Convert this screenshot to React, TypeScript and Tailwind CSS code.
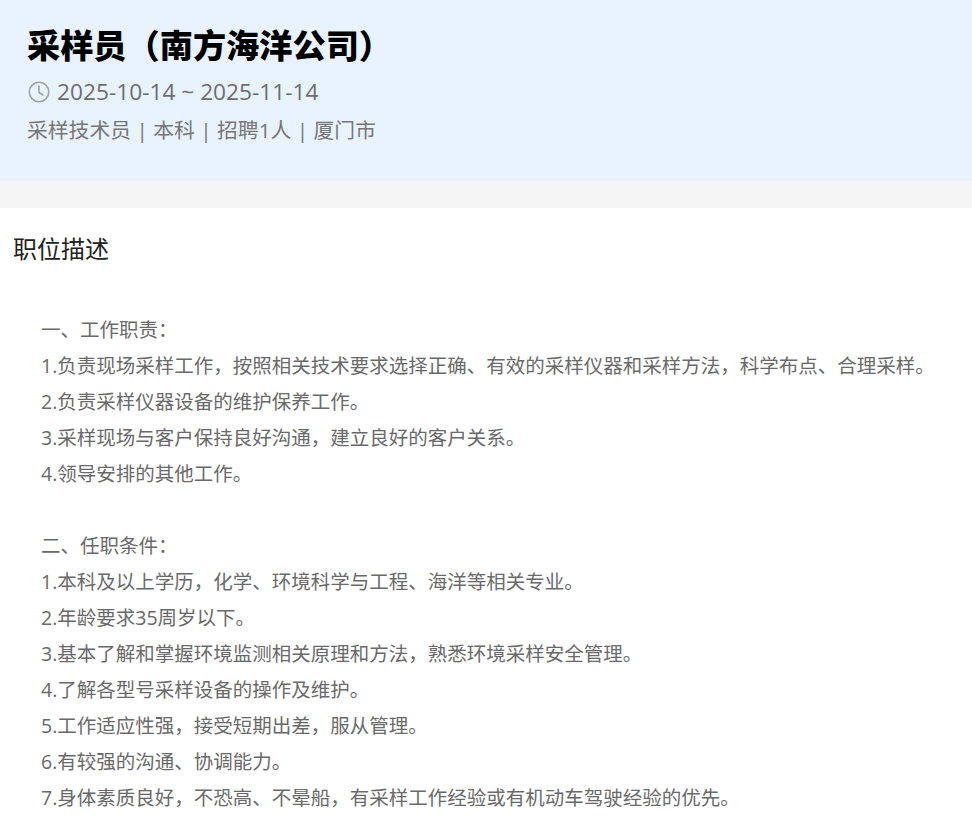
const FONT = "font-['Open_Sans','Noto_Sans_CJK_SC',sans-serif]";

const LINES = [
  "一、工作职责：",
  "1.负责现场采样工作，按照相关技术要求选择正确、有效的采样仪器和采样方法，科学布点、合理采样。",
  "2.负责采样仪器设备的维护保养工作。",
  "3.采样现场与客户保持良好沟通，建立良好的客户关系。",
  "4.领导安排的其他工作。",
  "",
  "二、任职条件：",
  "1.本科及以上学历，化学、环境科学与工程、海洋等相关专业。",
  "2.年龄要求35周岁以下。",
  "3.基本了解和掌握环境监测相关原理和方法，熟悉环境采样安全管理。",
  "4.了解各型号采样设备的操作及维护。",
  "5.工作适应性强，接受短期出差，服从管理。",
  "6.有较强的沟通、协调能力。",
  "7.身体素质良好，不恐高、不晕船，有采样工作经验或有机动车驾驶经验的优先。",
];

function ClockIcon() {
  return (
    <svg width="22" height="22" viewBox="0 0 22 22" fill="none" stroke="#98a2b0" strokeWidth="1.5" strokeLinecap="round" strokeLinejoin="round">
      <circle cx="11" cy="11" r="9.75" />
      <path d="M11 5V11.5L15 14" />
    </svg>
  );
}

export default function App() {
  return (
    <div className={`${FONT} h-[815px] overflow-hidden bg-white`}>
      <div className="h-[181px] bg-[#e8f3ff] pl-[28px] pt-[24px]">
        <h1 className="-ml-px text-[33.2px] font-black leading-[44px] text-black">采样员（南方海洋公司）</h1>
        <div className="mt-[8px] flex items-center gap-[7px] text-[22.7px] leading-[32px] text-[#6e6e6e]">
          <ClockIcon />
          <span>2025-10-14 ~ 2025-11-14</span>
        </div>
        <div className="-ml-px mt-[6px] text-[20.8px] leading-[32px] text-[#777777]">采样技术员 | 本科 | 招聘1人 | 厦门市</div>
      </div>
      <div className="h-[27px] bg-[#f5f5f5]" />
      <div className="pl-[13px] pt-[23px]">
        <h2 className="text-[24px] font-normal leading-[36px] text-[#222222]">职位描述</h2>
        <div className="mt-[45px] pl-[28px] text-[19.5px] leading-[36px] text-[#6a6a6a]">
          {LINES.map((line, i) => (
            <p key={i} className="h-[36px] whitespace-nowrap">{line}</p>
          ))}
        </div>
      </div>
    </div>
  );
}
